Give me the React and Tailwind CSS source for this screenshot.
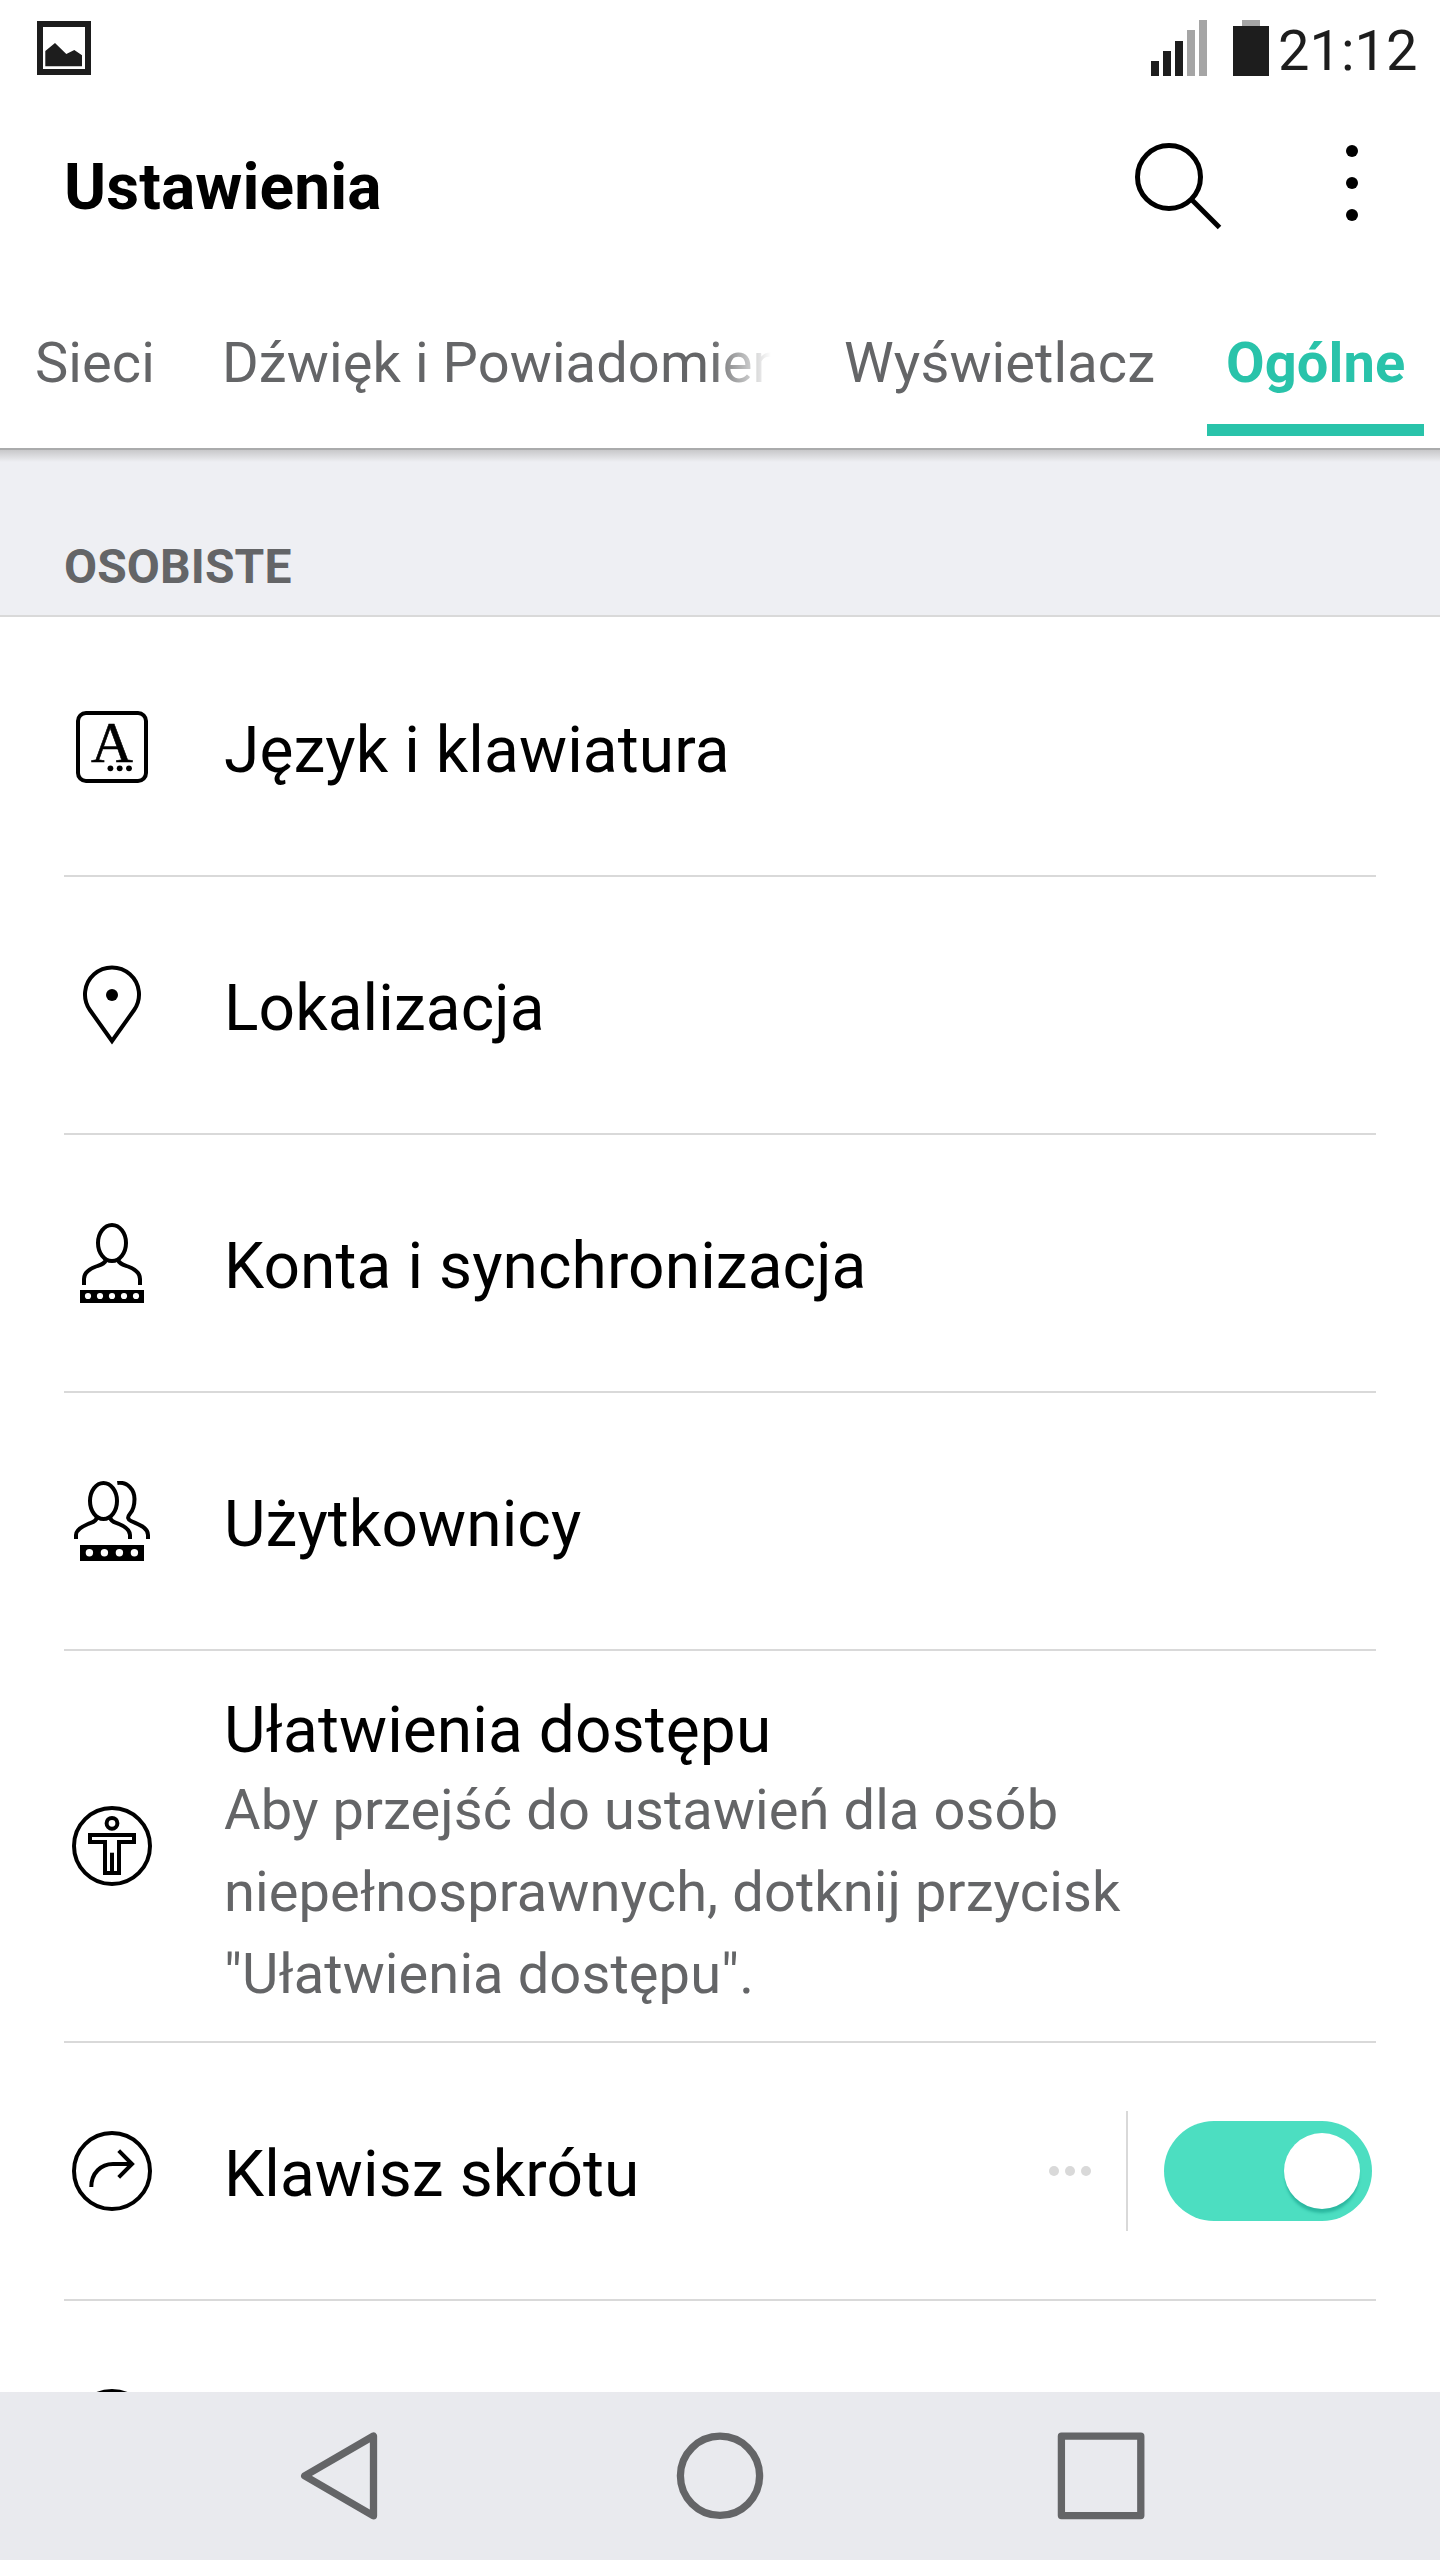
const tabs = [
  { label: "Sieci", className: "w-[187px] pl-[35px]" },
  { label: "Dźwięk i Powiadomienia", className: "w-[623px] pl-[35px]", faded: true },
  { label: "Wyświetlacz", className: "w-[397px] pl-[34px]" },
  { label: "Ogólne", className: "w-[217px] pl-[19px]", active: true },
];

const IconFrame = ({ children }) => (
  <svg
    viewBox="0 0 80 80"
    className="w-20 h-20 shrink-0"
    fill="none"
    stroke="#000"
    strokeWidth="4"
  >
    {children}
  </svg>
);

const LanguageIcon = () => (
  <IconFrame>
    <rect x="6" y="6" width="68" height="68" rx="8" />
    <text
      x="40"
      y="55"
      textAnchor="middle"
      fill="#000"
      stroke="#000"
      strokeWidth="0.6"
      fontSize="58"
      className="font-['Liberation_Serif',serif]"
    >
      A
    </text>
    <g fill="#000" stroke="none">
      <circle cx="38.4" cy="61.3" r="2.9" />
      <circle cx="47.7" cy="61.3" r="2.9" />
      <circle cx="57" cy="61.3" r="2.9" />
    </g>
  </IconFrame>
);

const LocationIcon = () => (
  <IconFrame>
    <path d="M40 76 L17.9 45 A27 27 0 1 1 62.1 45 Z" />
    <circle cx="40" cy="30" r="6" fill="#000" stroke="none" />
  </IconFrame>
);

const AccountIcon = () => (
  <IconFrame>
    <ellipse cx="40" cy="20" rx="14" ry="18" />
    <path d="M34 36 C33.5 41 28 42 24 43.5 C17 46 12 50 12 56 V62" />
    <path d="M46 36 C46.5 41 52 42 56 43.5 C63 46 68 50 68 56 V62" />
    <rect x="8" y="67" width="64" height="13" fill="#000" stroke="none" />
    <g fill="#fff" stroke="none">
      {[16, 28, 40, 52, 64].map((x) => (
        <circle key={x} cx={x} cy="73" r="3.1" />
      ))}
    </g>
  </IconFrame>
);

const UsersIcon = () => (
  <IconFrame>
    <ellipse cx="31.5" cy="20" rx="13.5" ry="18" />
    <path d="M25 36 C24.5 41 19.5 41.5 16 43 C9 46 4 49.5 4 54 V58" />
    <path d="M38 36 C38.5 41 43.5 41.5 47 43 C54 46 58 49.5 58 54 V58" />
    <path d="M45.3 2 C56 0.5 62.5 9 62.5 18 C62.5 25 61 29.5 57.8 33 C55 36.5 56 38.5 59 40 C66 43.5 76 46 76 54 V58" />
    <rect x="8" y="64" width="64" height="16" fill="#000" stroke="none" />
    <g fill="#fff" stroke="none">
      {[17.4, 32.4, 47.4, 62.4].map((x) => (
        <circle key={x} cx={x} cy="71.8" r="3.7" />
      ))}
    </g>
  </IconFrame>
);

const AccessibilityIcon = () => (
  <IconFrame>
    <circle cx="40" cy="40" r="38" />
    <circle cx="40" cy="17.3" r="5.4" />
    <path d="M18 29 H62 V36 H47 V67 H33 V36 H18 Z" />
    <path d="M40 46.7 V67" />
  </IconFrame>
);

const ShortcutIcon = () => (
  <IconFrame>
    <circle cx="40" cy="40" r="38" />
    <path d="M19.3 56 C19.3 42 29 33 41 33 H59" />
    <path d="M46.7 19.7 L60 33 L46.7 46.3" />
  </IconFrame>
);

const CircleIcon = () => (
  <IconFrame>
    <circle cx="40" cy="40" r="38" />
  </IconFrame>
);

const items = [
  { icon: LanguageIcon, title: "Język i klawiatura" },
  { icon: LocationIcon, title: "Lokalizacja" },
  { icon: AccountIcon, title: "Konta i synchronizacja" },
  { icon: UsersIcon, title: "Użytkownicy" },
  {
    icon: AccessibilityIcon,
    title: "Ułatwienia dostępu",
    description:
      'Aby przejść do ustawień dla osób niepełnosprawnych, dotknij przycisk "Ułatwienia dostępu".',
  },
  { icon: ShortcutIcon, title: "Klawisz skrótu", toggle: true },
];

function StatusBar() {
  return (
    <div className="flex justify-between h-24 pl-[37px] pr-[23px] text-[#1d1d1d]">
      <svg viewBox="0 0 54 54" className="w-[54px] h-[54px] mt-[21px]">
        <rect x="3" y="3" width="48" height="48" fill="none" stroke="currentColor" strokeWidth="6" />
        <path d="M8.3 30 L18 22 L29.3 33 L37.3 29 L45 34.3 V45.3 H8.3 Z" fill="currentColor" />
      </svg>
      <div className="flex">
        <div className="flex items-end gap-1 h-[76px]">
          <div className="w-2 h-[15px] bg-[#1d1d1d]" />
          <div className="w-2 h-[25px] bg-[#1d1d1d]" />
          <div className="w-2 h-[35px] bg-[#1d1d1d]" />
          <div className="w-2 h-[46px] bg-[#a5a5a5]" />
          <div className="w-2 h-[56px] bg-[#a5a5a5]" />
        </div>
        <div className="flex flex-col items-center ml-[26px] pt-5">
          <div className="w-[18px] h-1.5 bg-[#a5a5a5]" />
          <div className="w-9 h-[50px] bg-[#1d1d1d]" />
        </div>
        <div className="w-[139px] ml-[9px] mt-[18px] text-[56px] leading-[66px] whitespace-nowrap">
          21:12
        </div>
      </div>
    </div>
  );
}

function Header() {
  return (
    <div className="flex items-center h-48 pl-16">
      <h1 className="grow mb-2 text-[64px] leading-[76px] font-bold tracking-[0.1px]">Ustawienia</h1>
      <svg
        viewBox="0 0 88 88"
        className="w-[88px] h-[88px] -mt-6 overflow-visible"
        fill="none"
        stroke="#000"
        strokeWidth="5"
      >
        <circle cx="37" cy="41" r="31.5" />
        <path d="M59.5 63.5 L87.5 91.5" />
      </svg>
      <svg viewBox="0 0 12 76" className="w-3 h-[76px] ml-[126px] mr-[82px] -mt-[18px]">
        <circle cx="6" cy="6" r="6" />
        <circle cx="6" cy="38" r="6" />
        <circle cx="6" cy="70" r="6" />
      </svg>
    </div>
  );
}

function Tabs() {
  return (
    <div className="flex h-40">
      {tabs.map((tab) => (
        <div
          key={tab.label}
          className={`flex flex-col justify-between h-[148px] pt-[42px] shrink-0 ${tab.active ? "" : tab.className}`}
        >
          <div
            className={`text-[56px] leading-[66px] whitespace-nowrap tracking-[0.1px] ${
              tab.active ? `${tab.className} font-bold text-[#29c3aa]` : "text-[#646567]"
            } ${
              tab.faded
                ? "w-[549px] overflow-hidden [mask-image:linear-gradient(to_right,#000_89%,transparent)]"
                : ""
            }`}
          >
            {tab.label}
          </div>
          {tab.active && <div className="h-3 bg-[#29c3aa]" />}
        </div>
      ))}
    </div>
  );
}

function Toggle() {
  return (
    <div className="flex items-center">
      <div className="flex gap-1.5">
        <div className="w-2.5 h-2.5 rounded-full bg-[#d9d9d9]" />
        <div className="w-2.5 h-2.5 rounded-full bg-[#d9d9d9]" />
        <div className="w-2.5 h-2.5 rounded-full bg-[#d9d9d9]" />
      </div>
      <div className="w-0.5 h-[120px] ml-[35px] mr-9 bg-[#d9d9d9]" />
      <div className="flex items-center justify-end w-[208px] h-[100px] mr-1 pr-3 rounded-full bg-[#4cdec1]">
        <div className="w-[76px] h-[76px] rounded-full bg-white shadow-[0_5px_3px_-1px_#2bb8a0]" />
      </div>
    </div>
  );
}

function SettingsItem({ icon: Icon, title, description, toggle }) {
  return (
    <div
      className={`flex items-center shrink-0 mx-16 pl-2 border-b-2 border-[#d9d9d9] ${
        description ? "h-[392px]" : "h-[258px]"
      }`}
    >
      <Icon />
      <div className={`grow ml-[72px] tracking-[0.1px] ${description ? "pt-[15px]" : "pt-2"}`}>
        <div className="text-[64px] leading-[76px]">{title}</div>
        {description && (
          <div className="w-[960px] text-[56px] leading-[82px] text-[#646567]">{description}</div>
        )}
      </div>
      {toggle && <Toggle />}
    </div>
  );
}

function NavBar() {
  return (
    <div className="h-[168px] shrink-0 bg-[#e9eaee]">
      <svg
        viewBox="0 0 1440 168"
        className="w-full h-full"
        fill="none"
        stroke="#646567"
        strokeWidth="7.3"
        strokeLinejoin="round"
      >
        <path d="M304.7 83.8 L373.5 44 V123.8 Z" />
        <circle cx="720" cy="83.8" r="39.6" />
        <rect x="1061.4" y="44.2" width="79.4" height="79.4" />
      </svg>
    </div>
  );
}

export default function App() {
  return (
    <div className="flex flex-col w-[1440px] h-[2560px] overflow-hidden bg-white text-black font-[Roboto,sans-serif]">
      <div className="shrink-0 h-[448px]">
        <StatusBar />
        <Header />
        <Tabs />
      </div>
      <div className="shrink-0 h-[169px] bg-[#eeeff3] border-b-2 border-[#d9d9d9]">
        <div className="h-0.5 bg-[#aaabac]" />
        <div className="h-3 bg-linear-to-b from-[#c8c8ca] to-[#eeeff3]" />
        <div className="pl-16 mt-[77px] text-[48px] leading-[56px] font-bold tracking-[0.1px] text-[#646567]">
          OSOBISTE
        </div>
      </div>
      <div className="flex flex-col grow h-0 pt-0.5 overflow-hidden">
        {items.map((item) => (
          <SettingsItem key={item.title} {...item} />
        ))}
        <div className="shrink-0 h-[256px] flex items-center pl-[72px]">
          <CircleIcon />
        </div>
      </div>
      <NavBar />
    </div>
  );
}
